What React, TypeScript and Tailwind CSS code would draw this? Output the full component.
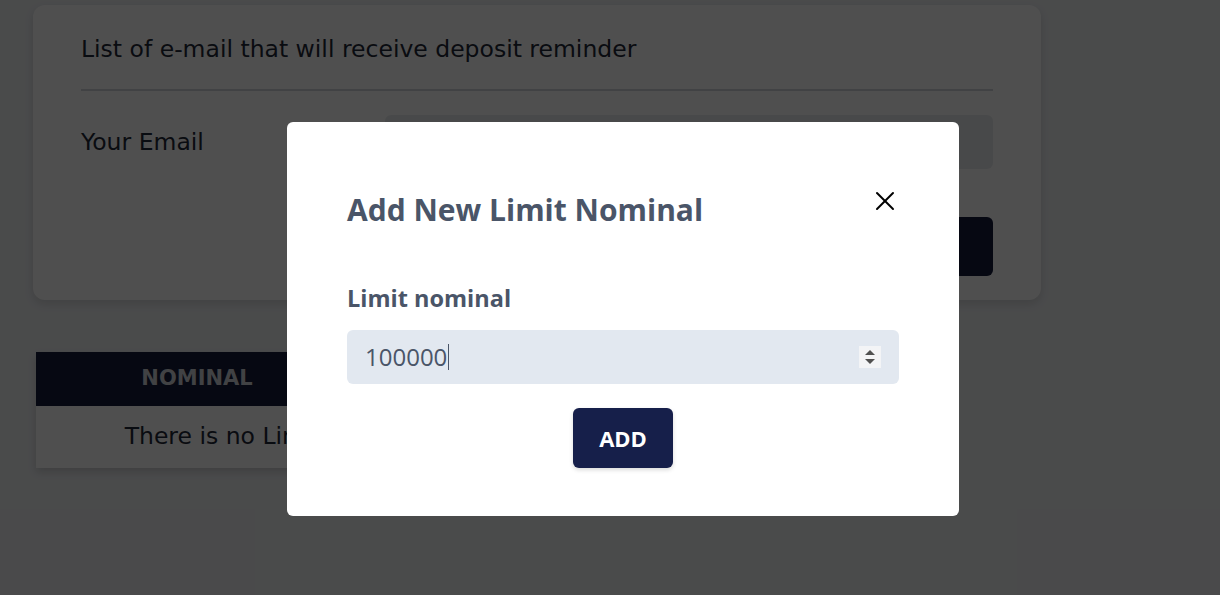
import { X } from "lucide-react";

export default function App() {
  return (
    <div className="relative h-[595px] w-[1220px] overflow-hidden bg-[#eef0f3] font-['DejaVu_Sans',sans-serif]">
      <div className="pl-[33px] pt-[5px]">
        <div className="w-[1008px] rounded-xl bg-white pl-12 pr-12 pb-6 shadow-[0_4px_10px_rgba(0,0,0,0.12)]">
          <p className="pt-7 text-[23.5px] leading-8 text-[#1f2937]">List of e-mail that will receive deposit reminder</p>
          <div className="mt-[24px] h-[2px] bg-[#d1d5db]" />
          <div className="mt-6 flex items-start">
            <span className="w-[304px] pt-[10px] text-[23.5px] text-[#1f2937]">Your Email</span>
            <div className="flex h-[54px] flex-1 items-center rounded-md bg-[#e9ecef] px-9 text-[20px] text-[#9ca3af]">
              gandhipranata01@gmail.com
            </div>
          </div>
          <div className="mt-12 flex justify-end gap-6">
            <button className="h-[59px] w-[280px] rounded-md bg-[#151b3d] text-[18px] font-bold text-white">ADD EMAIL</button>
            <button className="h-[59px] w-[281px] rounded-md bg-[#141a3a] text-[18px] font-bold text-white">TEST SEND EMAIL</button>
          </div>
        </div>
      </div>

      <div className="ml-[36px] mt-[52px] w-[478px] shadow-[0_4px_8px_rgba(0,0,0,0.15)]">
        <div className="flex h-[54px] bg-[#141a3a] text-[21px] font-bold text-[#d1d5db]">
          <div className="flex w-[322px] items-center justify-center">NOMINAL</div>
          <div className="flex flex-1 items-center justify-center">ACTION</div>
        </div>
        <div className="flex h-[62px] items-center justify-center bg-white text-[23.5px] text-[#1f2937]">
          There is no Limit Nominal
        </div>
      </div>

      <div className="absolute inset-0 bg-black/[0.69] pl-[287px] pt-[122px]">
        <div className="relative h-[394px] w-[672px] rounded-md bg-white px-[60px] pt-[70px] font-['Open_Sans',sans-serif]">
          <button className="absolute right-[58px] top-[63px] text-black">
            <X size={32} strokeWidth={1.5} />
          </button>
          <h2 className="text-[30px] font-bold leading-9 text-[#4a5568]">Add New Limit Nominal</h2>
          <label className="mt-[54px] block text-[23.5px] font-bold leading-8 text-[#4a5568]">Limit nominal</label>
          <div className="mt-[16px] flex h-[54px] items-center rounded-md bg-[#e2e8f0] pl-[18px] pr-[18px]">
            <span className="text-[24px] text-[#4a5568]">100000</span>
            <span className="ml-[1px] h-[26px] w-px bg-[#4a5568]" />
            <span className="ml-auto flex h-[22px] w-[22px] flex-col items-center justify-center gap-[4px] bg-[#f3f4f6]">
              <span className="h-0 w-0 border-x-[5px] border-b-[5px] border-x-transparent border-b-[#505050]" />
              <span className="h-0 w-0 border-x-[5px] border-t-[5px] border-x-transparent border-t-[#505050]" />
            </span>
          </div>
          <div className="mt-6 flex justify-center">
            <button className="h-[60px] w-[100px] rounded-md bg-[#161f4a] text-[22px] font-bold text-white shadow-[0_2px_4px_rgba(0,0,0,0.15)]">
              ADD
            </button>
          </div>
        </div>
      </div>
    </div>
  );
}
